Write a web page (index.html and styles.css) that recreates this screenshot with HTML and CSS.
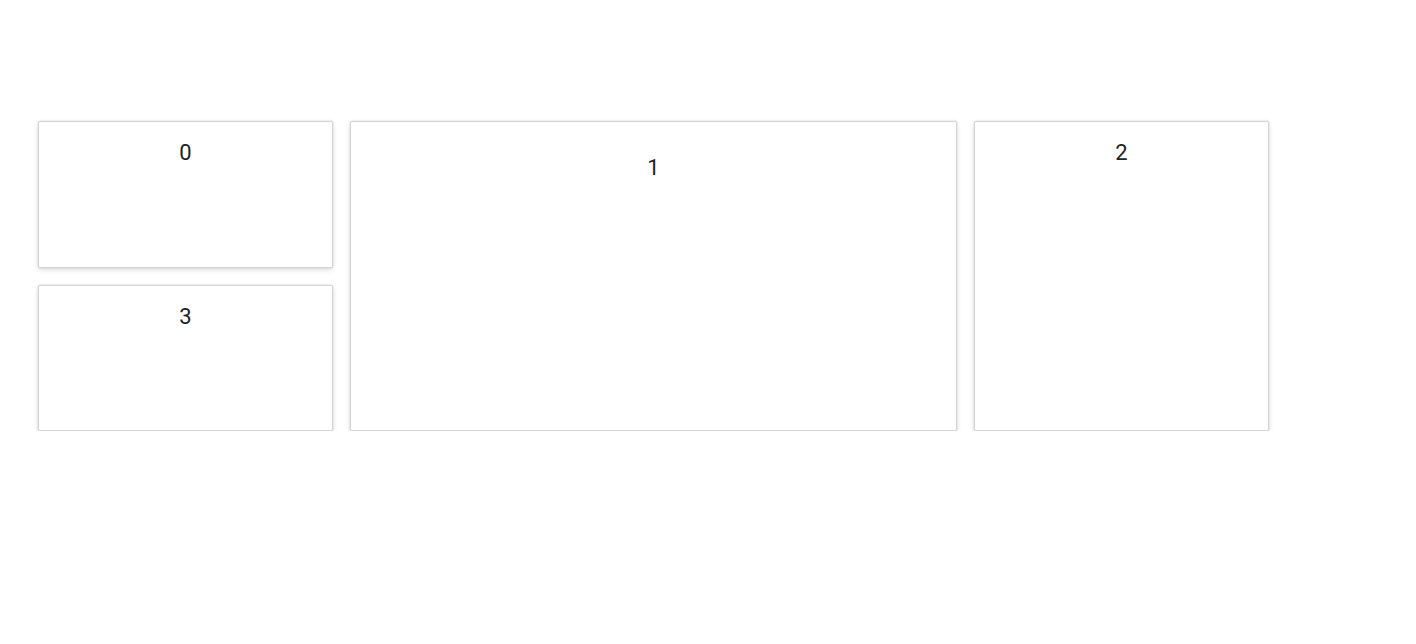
FILE: index.html
```html
<!DOCTYPE html>
<html>
<head>
<meta charset="utf-8">
<link rel="stylesheet" href="styles.css">
</head>
<body>
<div class="grid">
  <div class="card c0"><span class="label">0</span></div>
  <div class="card c1"><span class="label">1</span></div>
  <div class="card c2"><span class="label">2</span></div>
  <div class="card c3"><span class="label">3</span></div>
</div>
</body>
</html>
```

FILE: styles.css
```css
html, body {
  margin: 0;
  background: #ffffff;
}
body {
  padding: 121px 0 0 38px;
  font-family: Roboto, "Liberation Sans", sans-serif;
}
.grid {
  display: grid;
  grid-template-columns: 295px 295px 295px 295px;
  grid-template-rows: 147px 146px;
  gap: 17px;
}
.card {
  box-sizing: border-box;
  background: #fff;
  border: 1px solid #d4d4d4;
  border-radius: 2px;
  box-shadow: 0 0 2px rgba(0,0,0,0.16), 0 2px 5px rgba(0,0,0,0.12);
  text-align: center;
  padding-top: calc(5% + 3px);
}
.label {
  font-size: 22px;
  color: #222;
}
.c0 { grid-column: 1; grid-row: 1; }
.c1 { grid-column: 2 / span 2; grid-row: 1 / span 2; }
.c2 { grid-column: 4; grid-row: 1 / span 2; }
.c3 { grid-column: 1; grid-row: 2; }
```
